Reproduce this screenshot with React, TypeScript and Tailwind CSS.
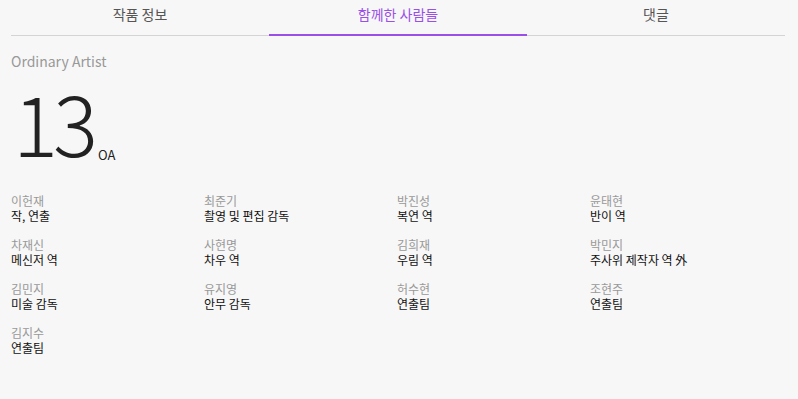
import React from "react";

const people: [string, string][] = [
  ["이헌재", "작, 연출"],
  ["최준기", "촬영 및 편집 감독"],
  ["박진성", "복연 역"],
  ["윤태현", "반이 역"],
  ["차재신", "메신저 역"],
  ["사현명", "차우 역"],
  ["김희재", "우림 역"],
  ["박민지", "주사위 제작자 역 外"],
  ["김민지", "미술 감독"],
  ["유지영", "안무 감독"],
  ["허수현", "연출팀"],
  ["조현주", "연출팀"],
  ["김지수", "연출팀"],
];

export default function App() {
  const font = { fontFamily: '"Noto Sans CJK KR", "Noto Sans", sans-serif' };
  return (
    <div className="min-h-[399px] w-full bg-[#f7f7f7]" style={font}>
      <div className="w-[774px] ml-[11px]">
        <div className="flex h-[36px] border-b border-[#d4d4d4]">
          <div className="flex-1 flex items-center justify-center pb-[6px] text-[14px] text-[#555]">작품 정보</div>
          <div className="flex-1 flex items-center justify-center pb-[6px] text-[14px] text-[#9a4fe8] border-b-2 border-[#9a4fe8] mb-[-1px]">함께한 사람들</div>
          <div className="flex-1 flex items-center justify-center pb-[6px] text-[14px] text-[#555]">댓글</div>
        </div>
        <div className="mt-[15px] text-[14px] text-[#999] leading-[20px]">Ordinary Artist</div>
        <div className="flex items-end mt-[22px] h-[70px]">
          <span className="text-[84px] font-light leading-none text-[#222] ml-[2px] tracking-[-5px]">13</span>
          <span className="text-[13px] text-[#222] ml-[5px] mb-[2px] leading-none">OA</span>
        </div>
        <div className="grid grid-cols-4 mt-[30px] gap-y-[14px] w-[772px]">
          {people.map(([n, r]) => (
            <div key={n} className="text-[12px] leading-[15px]">
              <div className="text-[#999]">{n}</div>
              <div className="text-[#111]">{r}</div>
            </div>
          ))}
        </div>
      </div>
    </div>
  );
}
